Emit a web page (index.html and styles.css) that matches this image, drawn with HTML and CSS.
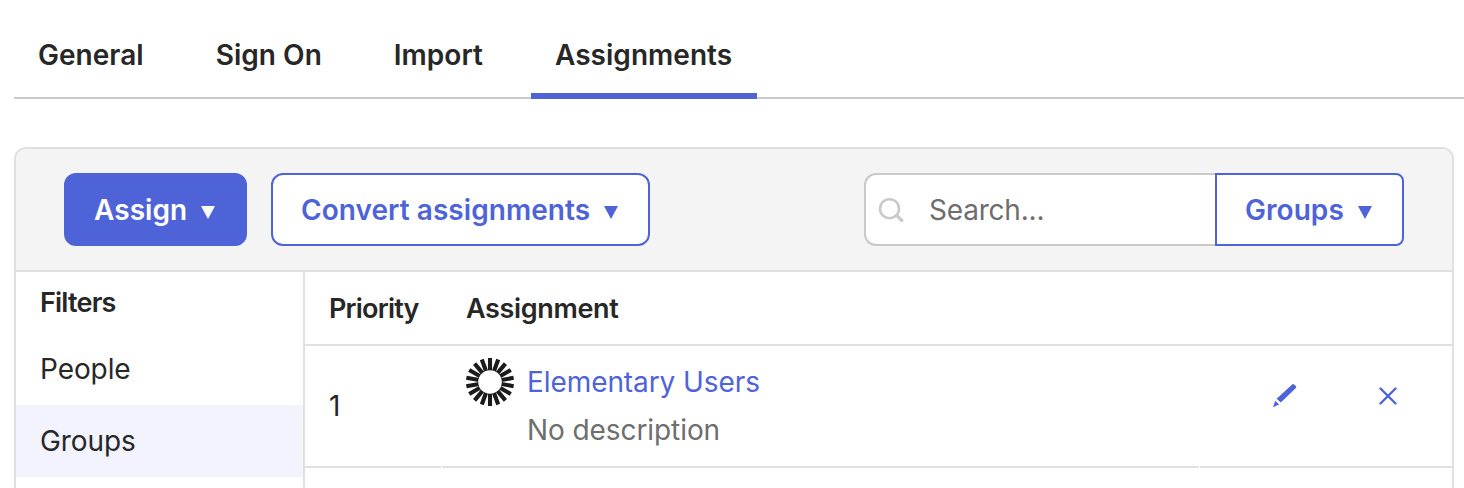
FILE: index.html
```html
<!DOCTYPE html>
<html lang="en">
<head>
  <meta charset="UTF-8">
  <title>Assignments</title>
  <meta name="viewport" content="width=device-width, initial-scale=1.0">
  <link rel="stylesheet" href="styles.css">
</head>
<body>
  <nav class="tabs">
    <a class="tab">General</a>
    <a class="tab">Sign On</a>
    <a class="tab">Import</a>
    <a class="tab active">Assignments</a>
  </nav>

  <div class="panel">
    <div class="toolbar">
      <button class="btn btn-primary">Assign <span class="caret"></span></button>
      <button class="btn btn-convert">Convert assignments <span class="caret"></span></button>
      <div class="search">
        <div class="search-field">
          <svg class="search-icon" width="26" height="26" viewBox="0 0 26 26" fill="none" stroke="#c9c9c9" stroke-linecap="round">
            <circle cx="11.5" cy="11.7" r="9.5" stroke-width="2.5"/>
            <path d="M18.5 18.3L23.8 23.5" stroke-width="3.2"/>
          </svg>
          <span>Search...</span>
        </div>
        <button class="btn btn-groups">Groups <span class="caret"></span></button>
      </div>
    </div>

    <div class="content">
      <aside class="filters">
        <h3 class="filters-title">Filters</h3>
        <a class="filter">People</a>
        <a class="filter selected">Groups</a>
      </aside>

      <div class="table">
        <div class="row row-head">
          <div class="cell cell-priority">Priority</div>
          <div class="cell cell-assignment">Assignment</div>
        </div>
        <div class="row row-item">
          <div class="cell cell-priority">1</div>
          <div class="cell cell-assignment">
            <!-- Group logo: ring of spokes -->
            <svg class="logo" width="48" height="48" viewBox="0 0 48 48" stroke="#1b1b1b" stroke-width="4.1">
              <path d="M24 0V48"/>
              <path d="M24 0V48" transform="rotate(20 24 24)"/>
              <path d="M24 0V48" transform="rotate(40 24 24)"/>
              <path d="M24 0V48" transform="rotate(60 24 24)"/>
              <path d="M24 0V48" transform="rotate(80 24 24)"/>
              <path d="M24 0V48" transform="rotate(100 24 24)"/>
              <path d="M24 0V48" transform="rotate(120 24 24)"/>
              <path d="M24 0V48" transform="rotate(140 24 24)"/>
              <path d="M24 0V48" transform="rotate(160 24 24)"/>
              <circle cx="24" cy="24" r="11.8" fill="#ffffff" stroke="none"/>
            </svg>
            <div class="group">
              <a class="group-name">Elementary Users</a>
              <span class="group-description">No description</span>
            </div>
          </div>
          <div class="cell cell-actions">
            <svg class="icon-edit" width="26" height="26" viewBox="0 0 26 26" fill="#4f63d9">
              <path d="M20.2 1.4Q21.1 0.6 22 1.4L23.9 3.1Q24.7 4 23.9 4.9L8.8 19.5L4.6 15.7Z"/>
              <path d="M3.3 17.8L7 21.6L1 24.2Z"/>
            </svg>
            <svg class="icon-remove" width="18" height="18" viewBox="0 0 18 18" fill="none" stroke="#4f63d9" stroke-width="2.4" stroke-linecap="round">
              <path d="M1.5 1.5L16.5 16.5M16.5 1.5L1.5 16.5"/>
            </svg>
          </div>
        </div>
      </div>
    </div>
  </div>
</body>
</html>
```
FILE: styles.css
```css
* {
  box-sizing: border-box;
}
body {
  margin: 0;
  color: #272727;
  background-color: #ffffff;
  font-family: Inter, "Liberation Sans", sans-serif;
  font-size: 28px;
  line-height: 36px;
  letter-spacing: -0.08px;
}
.tabs {
  display: flex;
  gap: 24px;
  height: 99px;
  margin-left: 14px;
  border-bottom: 2px solid #c9c9c9;
}
.tab {
  height: 99px;
  padding: 37px 24px 0;
  font-weight: 600;
  letter-spacing: 0.03px;
}
.tab.active {
  width: 226px;
  border-bottom: 6px solid #4f63d9;
}

/* Panel */
.panel {
  display: flex;
  flex-direction: column;
  width: 1440px;
  height: 341px;
  margin: 48px 0 0 14px;
  border: 2px solid #e0e0e0;
  border-bottom: none;
  border-radius: 12px 12px 0 0;
  overflow: hidden;
}
.toolbar {
  display: flex;
  align-items: flex-start;
  gap: 24px;
  height: 123px;
  flex-shrink: 0;
  padding: 24px 48px 0;
  background-color: #f4f4f4;
  border-bottom: 2px solid #e0e0e0;
}
.btn {
  display: flex;
  align-items: center;
  justify-content: space-between;
  height: 73px;
  padding: 0 30px 0 28px;
  background-color: #ffffff;
  color: #4f63d9;
  border: 2px solid #4f63d9;
  border-radius: 12px;
  font-family: inherit;
  font-size: 28px;
  font-weight: 600;
  letter-spacing: 0.05px;
  white-space: nowrap;
}
.btn-primary {
  width: 183px;
  background-color: #4f63d9;
  color: #ffffff;
}
.btn-convert {
  width: 379px;
}
.caret {
  margin-top: 5px;
  border-left: 7px solid transparent;
  border-right: 7px solid transparent;
  border-top: 13px solid currentColor;
}
.search {
  display: flex;
  margin-left: auto;
}
.search-field {
  display: flex;
  align-items: center;
  gap: 25px;
  width: 351px;
  height: 73px;
  padding-left: 12px;
  background-color: #ffffff;
  border: 2px solid #c9c9c9;
  border-right: none;
  border-radius: 12px 0 0 12px;
  color: #6e6e6e;
  letter-spacing: -0.2px;
}
.btn-groups {
  width: 189px;
  border-radius: 0 8px 8px 0;
}

/* Filters */
.content {
  display: flex;
  flex: 1;
  min-height: 0;
}
.filters {
  width: 289px;
  border-right: 2px solid #e0e0e0;
}
.filters-title {
  height: 61px;
  margin: 0;
  padding: 13px 24px 0;
  font-size: 27px;
  font-weight: 600;
  letter-spacing: -0.8px;
}
.filter {
  display: block;
  height: 72px;
  padding: 18px 24px;
}
.filter.selected {
  background-color: #f2f3fd;
}

/* Table */
.table {
  flex: 1;
}
.row {
  display: flex;
}
.cell {
  padding-left: 24px;
  border-bottom: 2px solid #e0e0e0;
}
.row-head {
  height: 74px;
  border-bottom: 2px solid #e0e0e0;
}
.row-head .cell {
  padding-top: 19px;
  border-bottom: none;
  font-size: 27px;
  font-weight: 600;
  letter-spacing: -0.8px;
}
.row-head .cell-assignment {
  letter-spacing: -0.35px;
}
.row-item {
  gap: 1px;
  height: 122px;
}
.cell-priority {
  width: 136px;
}
.row-head .cell-priority {
  width: 137px;
}
.row-item .cell-priority {
  padding-top: 42px;
}
.row-item .cell-assignment {
  display: flex;
  width: 757px;
  padding-top: 12px;
}
.group {
  display: flex;
  flex-direction: column;
  gap: 12px;
  margin-left: 13px;
  padding-top: 6px;
}
.group-name {
  color: #4f63d9;
}
.group-description {
  color: #6e6e6e;
}
.cell-actions {
  display: flex;
  flex: 1;
  padding: 37px 0 0 72px;
}
.icon-remove {
  margin: 4px 0 0 81px;
}
```
